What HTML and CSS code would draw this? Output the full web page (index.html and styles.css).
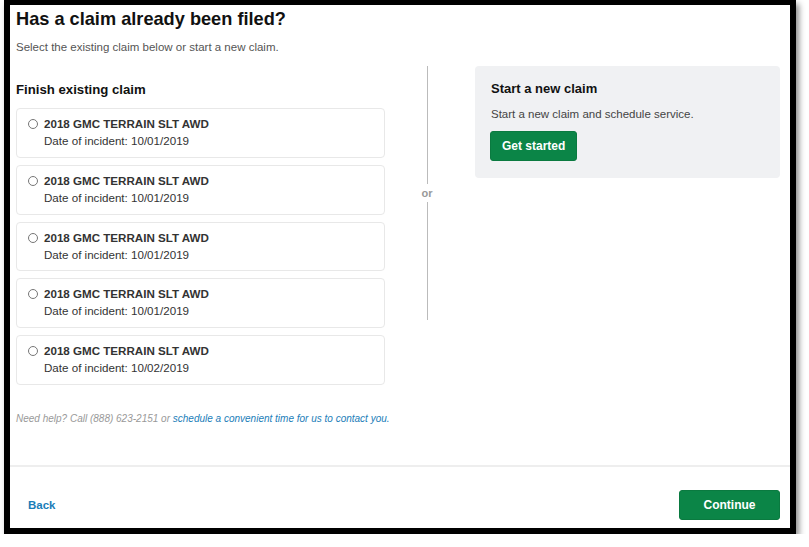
FILE: index.html
```html
<!DOCTYPE html>
<html lang="en">
<head>
<meta charset="UTF-8">
<meta name="viewport" content="width=device-width, initial-scale=1.0">
<title>Has a claim already been filed?</title>
<link rel="stylesheet" href="styles.css">
</head>
<body>
  <div class="frame">
    <div class="content">
      <h1>Has a claim already been filed?</h1>
      <p class="intro">Select the existing claim below or start a new claim.</p>

      <div class="columns">
        <div class="existing">
          <h2>Finish existing claim</h2>
          <label class="claim">
            <input type="radio" name="claim">
            <span class="claim-text">
              <strong>2018 GMC TERRAIN SLT AWD</strong>
              <span>Date of incident: 10/01/2019</span>
            </span>
          </label>
          <label class="claim">
            <input type="radio" name="claim">
            <span class="claim-text">
              <strong>2018 GMC TERRAIN SLT AWD</strong>
              <span>Date of incident: 10/01/2019</span>
            </span>
          </label>
          <label class="claim">
            <input type="radio" name="claim">
            <span class="claim-text">
              <strong>2018 GMC TERRAIN SLT AWD</strong>
              <span>Date of incident: 10/01/2019</span>
            </span>
          </label>
          <label class="claim">
            <input type="radio" name="claim">
            <span class="claim-text">
              <strong>2018 GMC TERRAIN SLT AWD</strong>
              <span>Date of incident: 10/01/2019</span>
            </span>
          </label>
          <label class="claim">
            <input type="radio" name="claim">
            <span class="claim-text">
              <strong>2018 GMC TERRAIN SLT AWD</strong>
              <span>Date of incident: 10/02/2019</span>
            </span>
          </label>
          <p class="help">Need help? Call (888) 623-2151 or <a href="#">schedule a convenient time for us to contact you.</a></p>
        </div>

        <div class="divider">
          <span class="line top"></span>
          <span class="or">or</span>
          <span class="line"></span>
        </div>

        <div class="new-claim">
          <div class="panel">
            <h3>Start a new claim</h3>
            <p>Start a new claim and schedule service.</p>
            <button class="btn">Get started</button>
          </div>
        </div>
      </div>
    </div>

    <div class="footer">
      <a href="#" class="back">Back</a>
      <button class="btn continue">Continue</button>
    </div>
  </div>
</body>
</html>
```

FILE: styles.css
```css
body {
  margin: 0;
  background-color: #fff;
  font-family: "Liberation Sans", Arial, sans-serif;
  color: #333;
}
.frame {
  width: 792px;
  height: 534px;
  box-sizing: border-box;
  margin-left: 4px;
  border: 6px solid #000;
  border-top-width: 5px;
  box-shadow: 3px 4px 6px rgba(0,0,0,0.45);
  display: flex;
  flex-direction: column;
  background-color: #fff;
}
.content {
  flex: 1;
  padding: 4px 10px 0 6px;
}
h1 {
  margin: 0;
  font-size: 18.2px;
  line-height: 21px;
  color: #111;
}
.intro {
  margin: 8px 0 0;
  font-size: 11.5px;
  line-height: 18px;
  color: #555;
}
.columns {
  display: flex;
  margin-top: 10px;
}
.existing {
  width: 369px;
}
h2 {
  margin: 15px 0 9px;
  font-size: 13.2px;
  line-height: 18px;
  color: #111;
}
.claim {
  display: flex;
  align-items: flex-start;
  height: 49.75px;
  box-sizing: border-box;
  padding: 6px 10px 7px 11px;
  margin-bottom: 7px;
  border: 1px solid #e8e8e8;
  border-radius: 4px;
}
.claim input {
  margin: 4px 6px 0 0;
  width: 10px;
  height: 10px;
  accent-color: #666;
}
.claim-text {
  display: flex;
  flex-direction: column;
  font-size: 11.6px;
  line-height: 17px;
}
.claim-text strong {
  color: #333;
}
.help {
  margin: 27px 0 0;
  font-size: 10px;
  line-height: 14px;
  font-style: italic;
  color: #999;
  white-space: nowrap;
}
.help a {
  color: #1a7db8;
  text-decoration: none;
}
.divider {
  width: 84px;
  height: 254px;
  display: flex;
  flex-direction: column;
  align-items: center;
}
.line {
  flex: 1;
  width: 1px;
  background-color: #bbb;
}
.line.top {
  flex: 0 0 118px;
}
.or {
  font-size: 11px;
  font-weight: bold;
  line-height: 14px;
  margin: 2px 0;
  color: #999;
}
.new-claim {
  flex: 1;
  margin-left: 6px;
}
.panel {
  background-color: #f0f1f3;
  border-radius: 4px;
  padding: 15px 16px 17px;
}
h3 {
  margin: 0;
  font-size: 13px;
  line-height: 16px;
  color: #111;
}
.panel p {
  margin: 9px 0 9px;
  font-size: 11.5px;
  line-height: 16px;
  color: #444;
}
.btn {
  background-color: #0b8547;
  color: #fff;
  border: 1px solid #0a7a40;
  border-radius: 3px;
  font-family: "Liberation Sans", Arial, sans-serif;
  font-size: 12px;
  font-weight: bold;
  height: 30px;
  padding: 0 11px;
  margin-left: -1px;
  cursor: pointer;
}
.footer {
  border-top: 2px solid #eee;
  padding: 23px 10px 8px 18px;
  display: flex;
  justify-content: space-between;
  align-items: center;
}
.back {
  font-size: 11.5px;
  font-weight: bold;
  color: #1a7db8;
  text-decoration: none;
}
.continue {
  width: 101px;
}
```
